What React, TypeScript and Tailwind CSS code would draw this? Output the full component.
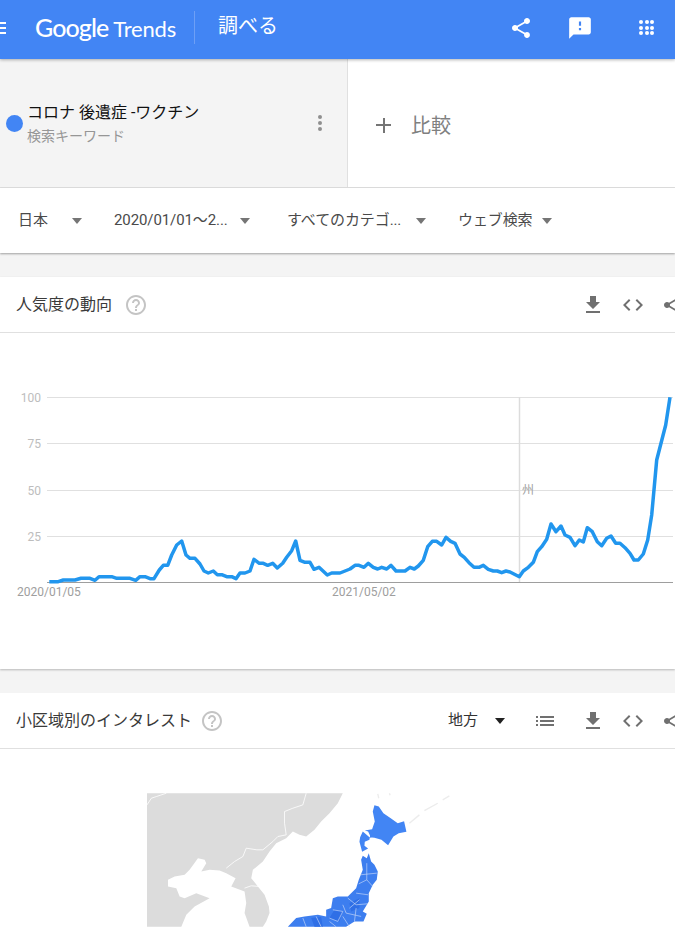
const headerIcons = {
  share:
    'M18 16.08c-.76 0-1.44.3-1.96.77L8.91 12.7c.05-.23.09-.46.09-.7s-.04-.47-.09-.7l7.05-4.11c.54.5 1.25.81 2.04.81 1.66 0 3-1.34 3-3s-1.34-3-3-3-3 1.34-3 3c0 .24.04.47.09.7L8.04 9.81C7.5 9.31 6.79 9 6 9c-1.66 0-3 1.34-3 3s1.34 3 3 3c.79 0 1.5-.31 2.04-.81l7.12 4.16c-.05.21-.08.43-.08.65 0 1.61 1.31 2.92 2.92 2.92s2.92-1.31 2.92-2.92-1.31-2.92-2.92-2.92z',
  feedback:
    'M20 2H4c-1.1 0-1.99.9-1.99 2L2 22l4-4h14c1.1 0 2-.9 2-2V4c0-1.1-.9-2-2-2zm-7 12h-2v-2h2v2zm0-4h-2V6h2v4z',
  download: 'M19 9h-4V3H9v6H5l7 7 7-7zM5 18v2h14v-2H5z',
  code: 'M9.4 16.6L4.8 12l4.6-4.6L8 6l-6 6 6 6 1.4-1.4zm5.2 0l4.6-4.6-4.6-4.6L16 6l6 6-6 6-1.4-1.4z',
  help: 'M11 18h2v-2h-2v2zm1-16C6.48 2 2 6.48 2 12s4.48 10 10 10 10-4.48 10-10S17.52 2 12 2zm0 18c-4.41 0-8-3.59-8-8s3.59-8 8-8 8 3.59 8 8-3.59 8-8 8zm0-14c-2.21 0-4 1.79-4 4h2c0-1.1.9-2 2-2s2 .9 2 2c0 2-3 1.75-3 5h2c0-2.25 3-2.5 3-5 0-2.21-1.79-4-4-4z',
  list: 'M3 13h2v-2H3v2zm0 4h2v-2H3v2zm0-8h2V7H3v2zm4 4h14v-2H7v2zm0 4h14v-2H7v2zM7 7v2h14V7H7z',
};

function Icon({ d, className }: { d: string; className: string }) {
  return (
    <svg viewBox="0 0 24 24" className={`shrink-0 ${className}`} fill="currentColor">
      <path d={d} />
    </svg>
  );
}

function Caret({ className = 'border-t-[#757575]' }: { className?: string }) {
  return (
    <span className={`block h-0 w-0 shrink-0 border-x-[5.5px] border-t-[6px] border-x-transparent ${className}`} />
  );
}

function Filter({ label, width, gap }: { label: string; width: string; gap: string }) {
  return (
    <div className={`flex shrink-0 items-center ${width}`}>
      <span className="whitespace-nowrap text-[15px] tracking-[-0.1px] text-[#4a4a4a]">{label}</span>
      <span className={gap}>
        <Caret />
      </span>
    </div>
  );
}

function CardActions() {
  return (
    <div className="flex shrink-0 items-center text-[#707070]">
      <Icon d={headerIcons.download} className="h-[24px] w-[24px]" />
      <Icon d={headerIcons.code} className="ml-[16px] h-[24px] w-[24px]" />
      <Icon d={headerIcons.share} className="ml-[16px] h-[24px] w-[24px]" />
    </div>
  );
}

// trend line traced off the reference, 3x page pixels; split at x=335
const zoomA = [
  [148, 605], [175, 605], [190, 600], [225, 600], [243, 595], [270, 595], [285, 601], [297, 590], [335, 590], [350, 595],
  [390, 595], [407, 601], [420, 590], [435, 590], [450, 596], [462, 596], [478, 570], [490, 556], [503, 556], [515, 525],
  [530, 495], [545, 483], [558, 525], [570, 535], [585, 535], [600, 552], [612, 573], [625, 579], [640, 573], [652, 584],
  [665, 584], [680, 590], [695, 590], [708, 596], [720, 579], [735, 579], [750, 573], [762, 538], [778, 550], [790, 550],
  [803, 556], [818, 550], [832, 564], [848, 550], [860, 532], [875, 512], [887, 483], [900, 541], [915, 547], [930, 547],
  [942, 568], [957, 562], [982, 585], [995, 579],
];
const zoomB = [
  [0, 579], [15, 579], [45, 567], [60, 556], [72, 556], [87, 562], [100, 550], [115, 562], [128, 567], [140, 562],
  [155, 567], [168, 556], [183, 573], [210, 573], [225, 562], [238, 567], [250, 558], [265, 541], [278, 500], [292, 484],
  [305, 484], [320, 495], [333, 472], [347, 484], [360, 490], [375, 522], [388, 532], [402, 548], [417, 562], [432, 562],
  [445, 556], [460, 568], [475, 573], [487, 573], [500, 578], [513, 573], [525, 576], [553, 590], [565, 573], [580, 562],
  [595, 547], [607, 515], [620, 500], [635, 478], [648, 432], [663, 455], [678, 438], [690, 465], [705, 472], [720, 497],
  [733, 480], [745, 486], [757, 443], [772, 455], [787, 485], [800, 497], [815, 475], [828, 468], [842, 490], [855, 490],
  [870, 503], [885, 520], [897, 540], [910, 540], [925, 522], [938, 480], [950, 405], [965, 240], [978, 190], [992, 135],
  [1005, 52],
];
const trendLine = [
  ...zoomA.map(([x, y]) => `${(x / 3).toFixed(1)},${(47 + y / 3).toFixed(1)}`),
  ...zoomB.map(([x, y]) => `${(335 + x / 3).toFixed(1)},${(47 + y / 3).toFixed(1)}`),
].join(' ');

const gridRows = [
  { y: 64.5, label: '100' },
  { y: 110.5, label: '75' },
  { y: 157.5, label: '50' },
  { y: 203.5, label: '25' },
];

function TrendChart() {
  return (
    <svg viewBox="0 0 675 336" className="block h-[336px] w-[675px]">
      {gridRows.map((row) => (
        <g key={row.y}>
          <line x1="47" x2="673" y1={row.y} y2={row.y} stroke="#e0e0e0" />
          <text x="41" y={row.y + 4} textAnchor="end" fontSize="12" fill="#bdbdbd" fontFamily="Roboto, sans-serif">
            {row.label}
          </text>
        </g>
      ))}
      <line x1="47" x2="673" y1="249.5" y2="249.5" stroke="#9e9e9e" />
      <line x1="519.5" x2="519.5" y1="64" y2="249" stroke="#dcdcdc" strokeWidth="1.5" />
      <text x="522" y="161" fontSize="12" fill="#a0a0a0" fontFamily="'Noto Sans CJK JP', sans-serif">
        州
      </text>
      <polyline points={trendLine} fill="none" stroke="#2196ee" strokeWidth="3.5" strokeLinejoin="round" />
      <text x="17" y="263" fontSize="12" fill="#9e9e9e" fontFamily="Roboto, sans-serif">
        2020/01/05
      </text>
      <text x="332" y="263" fontSize="12" fill="#9e9e9e" fontFamily="Roboto, sans-serif">
        2021/05/02
      </text>
    </svg>
  );
}

// map traced at 3x, origin at page (130, 780)
function RegionMap() {
  return (
    <svg viewBox="52 40 1000 401" className="block h-[134px] w-[333px]">
      <path
        d="M52 40H640L625 70L600 100L575 125L555 150L530 170L510 165L490 155L470 175L440 190L420 215L400 245L370 270L365 295L385 320L405 345L418 380L420 400L410 425L400 441H360L345 400L350 370L345 335L305 320L318 295L290 280L270 272L240 270L215 275L230 250L225 240L205 235L180 270L165 285L135 290L115 300L115 320L140 325L150 350L165 355L200 340L240 355L195 380L170 405L155 441H52Z"
        fill="#dcdcdc"
      />
      <g fill="none" stroke="#fff" strokeWidth="2.4" strokeLinejoin="round">
        <path d="M110 40L80 50L65 55L52 75" />
        <path d="M530 40L520 75L490 85L465 95L465 130L470 165L445 170L430 185L400 210L382 210L350 205L340 230L315 245L290 265" />
        <path d="M345 325L365 318L390 320" />
      </g>
      <path d="M840 130L870 105M885 92L925 70M940 60L960 48M745 42L748 55M780 40L782 46" stroke="#ececec" strokeWidth="4" fill="none" />
      <path
        d="M735 76L748 80L762 100L785 116L805 130L824 124L831 156L808 160L792 170L776 196L756 180L735 174L720 172L708 162L700 155L692 172L690 186L698 216L716 206L705 198L706 186L720 180L722 168L716 155L706 152L728 148L736 125L730 95Z"
        fill="#4285f4"
      />
      <path
        d="M695 240L700 228L712 235L718 220L725 245L735 255L745 275L742 300L730 315L718 340L718 365L700 395L712 402L702 425L675 425L650 441H475L500 415L525 410L565 405L590 410L590 390L605 385L610 355L625 350L655 350L680 325L688 300L700 270Z"
        fill="#3d7eef"
      />
      <path d="M615 390L640 395L630 425L600 415ZM545 415L575 412L580 441H555ZM660 370L690 355L690 385L665 395Z" fill="#2f6fe6" />
      <g fill="none" stroke="#c4d6f7" strokeWidth="2">
        <path d="M692 285L742 280M712 250V300L688 312M712 300L730 320M680 340L716 345M655 355L680 375L715 372M640 375L650 400L695 410M610 390L640 395L625 425L600 415M660 385L690 360M680 385L675 425M640 410L660 441M560 410L575 441M520 415L530 441M600 425L620 441" />
      </g>
    </svg>
  );
}

export default function App() {
  return (
    <div className="h-[927px] w-[675px] overflow-hidden bg-[#f4f4f4] font-['Roboto','Noto_Sans_CJK_JP',sans-serif]">
      <header className="relative z-10 flex h-[59px] items-center bg-[#4285f4] pb-[4px] text-white shadow-[0_1px_3px_rgba(0,0,0,0.3)]">
        <div className="flex w-[6px] flex-col gap-[3px]">
          <span className="block h-[2px] w-[6px] bg-white" />
          <span className="block h-[2px] w-[6px] bg-white" />
          <span className="block h-[2px] w-[6px] bg-white" />
        </div>
        <div className="ml-[29px] flex w-[159px] items-baseline whitespace-nowrap font-['Lato',sans-serif]">
          <span className="text-[25px] font-medium tracking-[-0.9px]">Google</span>
          <span className="ml-[5px] text-[22px] tracking-[-0.2px]">Trends</span>
        </div>
        <span className="block h-[33px] w-px bg-[#6d9ff6]" />
        <span className="-mt-[3px] ml-[23px] text-[20px]">調べる</span>
        <Icon d={headerIcons.share} className="ml-[231px] h-[24px] w-[24px]" />
        <Icon d={headerIcons.feedback} className="ml-[34px] h-[26px] w-[26px]" />
        <div className="ml-[46px] grid grid-cols-3 gap-[1.5px]">
          {Array.from({ length: 9 }, (_, i) => (
            <span key={i} className="block h-[4px] w-[4px] rounded-full bg-white" />
          ))}
        </div>
      </header>

      <section className="flex h-[129px] border-b border-[#e0e0e0] bg-white">
        <div className="flex w-[348px] items-center border-r border-[#e0e0e0] bg-[#f4f4f4] pl-[6px]">
          <span className="block h-[17px] w-[17px] shrink-0 rounded-full bg-[#4285f4]" />
          <div className="ml-[4px] mt-[3px] flex flex-col">
            <span className="text-[16px] leading-[22px] text-[#111]">コロナ 後遺症 -ワクチン</span>
            <span className="text-[14px] leading-[24px] text-[#969696]">検索キーワード</span>
          </div>
          <div className="ml-auto mr-[25px] flex flex-col gap-[2px]">
            <span className="block h-[4px] w-[4px] rounded-full bg-[#8f8f8f]" />
            <span className="block h-[4px] w-[4px] rounded-full bg-[#8f8f8f]" />
            <span className="block h-[4px] w-[4px] rounded-full bg-[#8f8f8f]" />
          </div>
        </div>
        <div className="flex items-center pl-[28px] text-[#808080]">
          <span className="relative mt-[4px] block h-[15px] w-[15px]">
            <span className="absolute left-0 top-[6.5px] h-[2px] w-[15px] bg-[#757575]" />
            <span className="absolute left-[6.5px] top-0 h-[15px] w-[2px] bg-[#757575]" />
          </span>
          <span className="ml-[20px] mt-[5px] text-[20px]">比較</span>
        </div>
      </section>

      <section className="flex h-[65px] items-center bg-white pl-[18px] shadow-[0_1px_2px_rgba(0,0,0,0.35)]">
        <Filter label="日本" width="w-[96px]" gap="ml-[24px]" />
        <Filter label="2020/01/01～2..." width="w-[173px]" gap="ml-[12px]" />
        <Filter label="すべてのカテゴ..." width="w-[171px]" gap="ml-[15px]" />
        <Filter label="ウェブ検索" width="w-[120px]" gap="ml-[9px]" />
      </section>

      <section className="mt-[24px] h-[392px] bg-white shadow-[0_1px_2px_rgba(0,0,0,0.25)]">
        <div className="flex h-[56px] items-center border-b border-[#e0e0e0] pl-[16px]">
          <span className="whitespace-nowrap text-[16px] text-[#3a3a3a]">人気度の動向</span>
          <Icon d={headerIcons.help} className="ml-[12px] h-[24px] w-[24px] text-[#c4c4c4]" />
          <div className="-mr-[10px] ml-auto">
            <CardActions />
          </div>
        </div>
        <TrendChart />
      </section>

      <section className="mt-[24px] bg-white pb-[40px]">
        <div className="flex h-[56px] items-center border-b border-[#e0e0e0] pl-[16px]">
          <span className="whitespace-nowrap text-[16px] text-[#3a3a3a]">小区域別のインタレスト</span>
          <Icon d={headerIcons.help} className="ml-[8px] h-[24px] w-[24px] text-[#c4c4c4]" />
          <div className="-mr-[10px] ml-auto flex items-center">
            <span className="whitespace-nowrap text-[15px] text-[#333]">地方</span>
            <span className="ml-[17px]">
              <Caret className="border-t-[#212121]" />
            </span>
            <Icon d={headerIcons.list} className="ml-[28px] h-[24px] w-[24px] text-[#707070]" />
            <div className="ml-[24px]">
              <CardActions />
            </div>
          </div>
        </div>
        <div className="pl-[147px] pt-[44px]">
          <RegionMap />
        </div>
      </section>
    </div>
  );
}
